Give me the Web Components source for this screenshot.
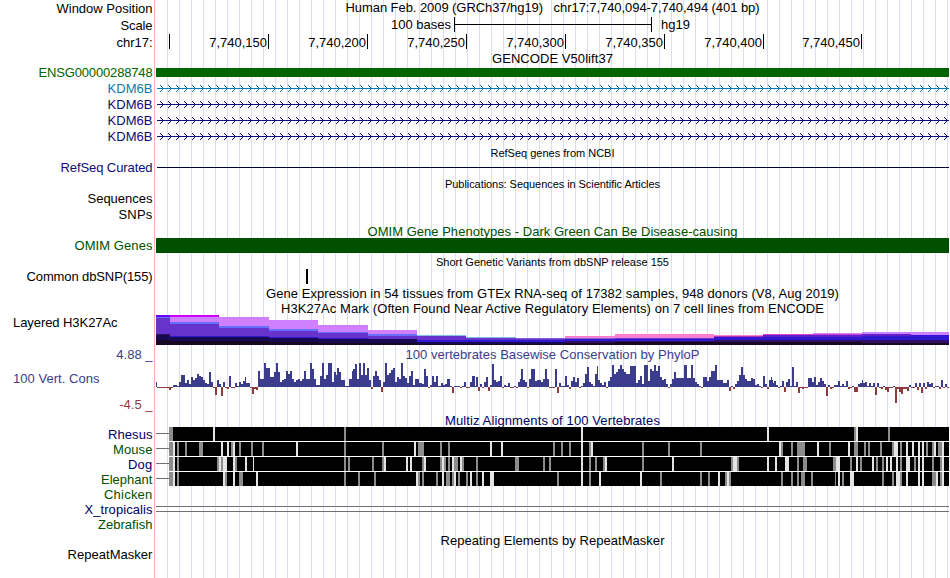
<!DOCTYPE html>
<html lang="en">
<head>
<meta charset="utf-8">
<title>Genome tracks</title>
<style>
  body {
    margin: 0;
    background: white;
    font: 13px/15px "Liberation Sans", Arial, sans-serif;
    color: black;
    overflow: hidden;
  }
</style>
</head>
<body>
<genome-view>
  <track-row label="Window Position" fit="96" pad="1" height="17">
    <track-title fit="414">Human Feb. 2009 (GRCh37/hg19)   chr17:7,740,094-7,740,494 (401 bp)</track-title>
  </track-row>
  <track-row label="Scale" fit="32" pad="1" height="17"><scale-bar></scale-bar></track-row>
  <track-row label="chr17:" fit="36" pad="1" height="17"><base-ruler></base-ruler></track-row>
  <track-row height="14"><track-title fit="121">GENCODE V50lift37</track-title></track-row>
  <track-row label="ENSG00000288748" fit="114" color="#006400" height="16"><solid-item top="3" size="9" color="#006400"></solid-item></track-row>
  <track-row label="KDM6B" fit="45" color="#0c78b0" height="16"><gene-line color="#0c78b0"></gene-line></track-row>
  <track-row label="KDM6B" fit="45" color="#0c0c78" height="16"><gene-line color="#0c0c78"></gene-line></track-row>
  <track-row label="KDM6B" fit="45" color="#0c0c78" height="16"><gene-line color="#0c0c78"></gene-line></track-row>
  <track-row label="KDM6B" fit="45" color="#0c0c78" height="16"><gene-line color="#0c0c78"></gene-line></track-row>
  <track-row height="15"><track-title small pad="2" fit="124">RefSeq genes from NCBI</track-title></track-row>
  <track-row label="RefSeq Curated" fit="92" color="#0c0c78" height="16"><solid-item top="7" size="1" left="1" color="#00003c"></solid-item></track-row>
  <track-row height="15"><track-title small pad="2" fit="215">Publications: Sequences in Scientific Articles</track-title></track-row>
  <track-row label="Sequences" fit="65" height="16"></track-row>
  <track-row label="SNPs" fit="34" height="16"></track-row>
  <track-row height="15"><track-title pad="1" fit="370" color="#005000">OMIM Gene Phenotypes - Dark Green Can Be Disease-causing</track-title></track-row>
  <track-row label="OMIM Genes" fit="78" color="#005000" height="15"><solid-item size="15" color="#005000"></solid-item></track-row>
  <track-row height="16"><track-title small pad="3" fit="233">Short Genetic Variants from dbSNP release 155</track-title></track-row>
  <track-row label="Common dbSNP(155)" fit="126" height="16"><solid-item size="15" left="150" length="2" color="black"></solid-item></track-row>
  <track-row height="16"><track-title pad="1" fit="573">Gene Expression in 54 tissues from GTEx RNA-seq of 17382 samples, 948 donors (V8, Aug 2019)</track-title></track-row>
  <track-row height="14"><track-title fit="543">H3K27Ac Mark (Often Found Near Active Regulatory Elements) on 7 cell lines from ENCODE</track-title></track-row>
  <track-row label="Layered H3K27Ac" fit="104.5" start height="32"><layered-signal></layered-signal></track-row>
  <track-row label="100 Vert. Cons" fit="86.5" start pad="24" color="#3c3c8c" height="65" max="4.88" min="-4.5">
    <track-title fit="294" color="#3c3c8c">100 vertebrates Basewise Conservation by PhyloP</track-title>
    <cons-plot></cons-plot>
  </track-row>
  <track-row height="15"><track-title pad="1" fit="215" color="#000064">Multiz Alignments of 100 Vertebrates</track-title></track-row>
  <track-row label="Rhesus" fit="44.5" color="#000064" height="15"><align-strip species="rhesus"></align-strip></track-row>
  <track-row label="Mouse" fit="39.5" color="#005000" height="15"><align-strip species="mouse"></align-strip></track-row>
  <track-row label="Dog" fit="24.5" color="#000064" height="15"><align-strip species="dog"></align-strip></track-row>
  <track-row label="Elephant" fit="51.5" color="#005000" height="15"><align-strip species="elephant"></align-strip></track-row>
  <track-row label="Chicken" fit="48.5" color="#005000" height="15"></track-row>
  <track-row label="X_tropicalis" fit="68" color="#000064" height="15">
    <solid-item top="4" size="1" color="#707070"></solid-item>
    <solid-item top="4" size="1" color="#707070"></solid-item>
  </track-row>
  <track-row label="Zebrafish" fit="54.5" color="#005000" height="15"></track-row>
  <track-row height="15"><track-title pad="1" fit="224">Repeating Elements by RepeatMasker</track-title></track-row>
  <track-row label="RepeatMasker" fit="85" height="31"></track-row>
</genome-view>

<script>
// all track graphics share this x origin, plots are drawn in page pixels
const ORIGIN = 156
const WIDTH = 793

// spread the letters so that the text gets exactly the given width
function fitText(el, width) {
  if (!width) return
  const natural = el.getBoundingClientRect().width
  el.style.letterSpacing = `${(width - natural) / el.textContent.length}px`
}

function svg(height, body) {
  return `<svg width="${WIDTH}" height="${height}" viewBox="${ORIGIN} 0 ${WIDTH} ${height}" shape-rendering="crispEdges">${body}</svg>`
}

function rect(x, y, w, h, fill) {
  return `<rect x="${x}" y="${y}" width="${w}" height="${h}" fill="${fill}"/>`
}

class GenomeView extends HTMLElement {
  connectedCallback() {
    this.attachShadow({ mode: "open" }).innerHTML = `
      <style>
        :host {
          display: flex;
          flex-direction: column;
          width: 949px;
          height: 578px;
          background:
            linear-gradient(#ffb4b4, #ffb4b4) 154px 0 / 1px 100% no-repeat,
            repeating-linear-gradient(90deg, #dcdcf8 0 1px, transparent 1px 12px) 167px 0 / 782px 100% no-repeat;
        }
      </style>
      <slot></slot>
    `
  }
}

class TrackRow extends HTMLElement {
  connectedCallback() {
    const attr = (name) => this.getAttribute(name)
    const max = attr("max")
    this.attachShadow({ mode: "open" }).innerHTML = `
      <style>
        :host { display: flex; flex: none; height: ${attr("height")}px; }
        .side {
          box-sizing: border-box;
          flex: none;
          display: grid;
          width: 156px;
          padding-right: 3.5px;
          color: ${attr("color") || "black"};
        }
        .side > * { grid-area: 1 / 1; white-space: pre; justify-self: end; }
        .label { margin-top: ${attr("pad") || 0}px; align-self: start; }
        :host([start]) .label { justify-self: start; margin-left: 13px; }
        .limits { display: flex; flex-direction: column; justify-content: space-between; height: 65px; text-align: right; }
        .min { color: #8c3c3c; }
        .data { display: flex; flex-direction: column; width: ${WIDTH}px; }
      </style>
      <div class="side">
        <span class="label">${attr("label") || ""}</span>
        ${max ? `<div class="limits"><span>${max} _</span><span class="min">${attr("min")} _</span></div>` : ""}
      </div>
      <div class="data"><slot></slot></div>
    `
    fitText(this.shadowRoot.querySelector(".label"), attr("fit"))
  }
}

class TrackTitle extends HTMLElement {
  connectedCallback() {
    this.attachShadow({ mode: "open" }).innerHTML = `
      <style>
        :host {
          display: block;
          align-self: center;
          height: 15px;
          margin-top: ${this.getAttribute("pad") || 0}px;
          color: ${this.getAttribute("color") || "black"};
        }
        :host([small]) { font-size: 11px; line-height: 13px; height: 13px; }
        slot { display: block; white-space: pre; }
      </style>
      <slot></slot>
    `
    fitText(this, this.getAttribute("fit"))
  }
}

class ScaleBar extends HTMLElement {
  connectedCallback() {
    this.attachShadow({ mode: "open" }).innerHTML = `
      <style>
        :host { display: flex; padding-left: 235px; }
        .bar {
          display: flex;
          align-items: center;
          box-sizing: border-box;
          width: 198px;
          height: 15px;
          margin: 0 9px 0 3px;
          border: solid black;
          border-width: 0 1px;
        }
        .bar::before { content: ""; flex: 1; height: 1px; background: black; }
      </style>
      <span class="from">100 bases</span><span class="bar"></span><span>hg19</span>
    `
    fitText(this.shadowRoot.querySelector(".from"), 60)
  }
}

class BaseRuler extends HTMLElement {
  connectedCallback() {
    const ticks = [[169, ""], [268, "7,740,150"], [367, "7,740,200"], [466, "7,740,250"],
      [565, "7,740,300"], [664, "7,740,350"], [763, "7,740,400"], [861, "7,740,450"]]
    let last = ORIGIN
    const cells = ticks.map(([x, text]) => {
      const cell = `<span style="width: ${x + 1 - last}px">${text}</span>`
      last = x + 1
      return cell
    })
    this.attachShadow({ mode: "open" }).innerHTML = `
      <style>
        :host { display: flex; }
        span {
          box-sizing: border-box;
          height: 15px;
          padding: 1px 1px 0 0;
          border-right: 1px solid black;
          text-align: right;
        }
      </style>
      ${cells.join("")}
    `
  }
}

class SolidItem extends HTMLElement {
  connectedCallback() {
    const attr = (name) => this.getAttribute(name)
    this.attachShadow({ mode: "open" }).innerHTML = `
      <style>
        :host {
          display: block;
          height: ${attr("size")}px;
          margin: ${attr("top") || 0}px 0 0 ${attr("left") || 0}px;
          ${attr("length") ? `width: ${attr("length")}px;` : ""}
          background: ${attr("color")};
        }
      </style>
    `
  }
}

class GeneLine extends HTMLElement {
  connectedCallback() {
    const color = this.getAttribute("color")
    let body = rect(157, 7, 792, 1, color)
    for (let x = 160; x < 949; x += 8) {
      for (let i = 0; i < 3; i++) {
        body += rect(x + i, 4 + i, 1, 1, color) + rect(x + i, 10 - i, 1, 1, color)
      }
    }
    this.attachShadow({ mode: "open" }).innerHTML = `
      <style>:host { display: block; } svg { display: block; }</style>
      ${svg(15, body)}
    `
  }
}

// column start, then the top edge and colour of each layer downwards
const LAYERS = [
  [156, 0, "#6600ff", 2, "#6470ff", 3, "#6633cc", 19, "#301060", 20, "#180a50", 25, "#180824"],
  [170, 0, "#cc00ff", 2, "#d080ff", 7, "#6670ff", 9, "#6633cc", 21, "#3018d0", 22, "#180a50", 26, "#180824"],
  [219, 2, "#d080ff", 11, "#6670ff", 13, "#6633cc", 21, "#3018d0", 22, "#180a50", 26, "#180824"],
  [269, 5, "#d080ff", 14, "#6670ff", 16, "#6633cc", 22, "#3018d0", 23, "#180a50", 27, "#180824"],
  [318, 10, "#d080ff", 17, "#6670ff", 18, "#6633cc", 23, "#3018d0", 24, "#180a50", 28, "#180824"],
  [368, 15, "#d080ff", 19, "#6670ff", 21, "#6633cc", 24, "#180a50", 28, "#180824"],
  [417, 20, "#80c0f0", 21, "#6633cc", 25, "#3018d0", 27, "#180a50", 29, "#180824"],
  [466, 22, "#80c0f0", 23, "#6633cc", 25, "#3018d0", 27, "#180a50", 29, "#180824"],
  [516, 23, "#8060d0", 24, "#6633cc", 25, "#3018d0", 27, "#180a50", 29, "#180824"],
  [565, 21, "#ff80d0", 23, "#8060d0", 24, "#3018d0", 26, "#301060", 28, "#180824"],
  [615, 19, "#ff80d0", 23, "#6633cc", 24, "#3018d0", 26, "#301060", 27, "#180824"],
  [714, 20, "#ff80d0", 21, "#b030c0", 22, "#3018d0", 25, "#301060", 27, "#180824"],
  [763, 19, "#e040e0", 20, "#6020c8", 22, "#3018d0", 25, "#301060", 27, "#180824"],
  [813, 18, "#d080ff", 19, "#d040e0", 20, "#6020c8", 22, "#3018d0", 25, "#301060", 27, "#180824"],
  [862, 17, "#d080ff", 19, "#6020c8", 21, "#3018d0", 25, "#301060", 28, "#180824"],
  [911, 17, "#d080ff", 20, "#3018d0", 25, "#301060", 28, "#180824"],
  [949]
]

class LayeredSignal extends HTMLElement {
  connectedCallback() {
    let body = ""
    LAYERS.slice(0, -1).forEach(([x, ...layers], n) => {
      for (let i = 0; i < layers.length; i += 2) {
        body += rect(x, layers[i], LAYERS[n + 1][0] - x, 30 - layers[i], layers[i + 1])
      }
    })
    this.attachShadow({ mode: "open" }).innerHTML = `
      <style>:host { display: block; } svg { display: block; }</style>
      ${svg(30, body)}
    `
  }
}

// runs of scores, 2px for each base: the x of the first one, then the heights
const SCORES = [
  [156, 5],
  [157, -1, -1, -1, -1, -1, -1, -3, -1, 2, 2, 1, 5, 12, 12, 4, 7, 3, 10, 7, 9, 13, 11, 10, 7, 4, 3, 15, 5, -1, -8, 7, 3, -9, 5, -1, -2, 11, -1, -1, 4, 1, 5, 3, 6],
  [245, 10],
  [246, 4, 4, -1, -7, -2, -3, 16, 8, 8, 24, 19, 19, 10, 10, 15, 24, 15, 5, 7, 8, 16, 13, 16, 8, 5, 7, 8, 6, 8, 16, 8, 8, 24, 18, 8, 2, 2, 11, 24, 8, 12, 24, 24, 5, 15],
  [336, 12],
  [337, 19, 15, 7, 7, 1, 1],
  [349, 8],
  [352, 16],
  [353, 18, 23, 8, 24, 12, 24, 12, 19, 7, -2, 11, 16, 11, 7, -5, 5, 24, 12, 14, 17, 19, 5, 10, 8, 24, 11, 9, 4, 11, 16, 2, 8, 8, 4],
  [421, 4],
  [422, 3, 18, 11, -1, 2, 11, 5, 11, 1],
  [441, 4, 2, 3, 8],
  [450, 1, -6, 1, 1, 1, -1, 1, 5, -1, -1, 5, 11],
  [475, 1],
  [476, 10, -4, 3, -1, 5, 10, -4, 2, 23, 7, 5, 6, 11, -1, 2, 1, 4, -1, -1, 1, -1, 5],
  [520, 8],
  [521, 18, 7, 5, -1, 8, 18, 18, 6, 7, 7, 5, 8, 18, 8],
  [549, -1, -1, -1],
  [555, 18, -6, 4, 1, 1, 11, 2, -2, 6, 10, 5, 9, -1, 1, 4, 13, 20, 5, 3, 1, 13],
  [597, 21],
  [598, 7, 4, 2, 5, -1, 6, 10, 22, 13, 15, 18, 22, 18, 15, 13, 13, 21, 21, 21, 4, 7, 11, 3, 22, 22, 6, 18, 16, 22, 16, 21, 10, 7, 8, 3, -1, 3, 8, 15, 9, 9, 9, 9, 22],
  [686, 22],
  [687, 9, 9, 22, 9, 5, 3, 1, -1, 10, 10, 6, 10, 16, 16, 22, 7, 7, 7, 4, 4, 7, -4, 1, -2, 3, 6, 12, 20, 12, 8, 6],
  [749, 6],
  [751, 9, 8, 2, 3, 1, -1, 11, 3, -2, 7],
  [771, 10],
  [772, 7],
  [773, 4],
  [774, 6, 2, -1, 1, 6, -5, 5, 8, 1, 20, 1, 5, -6, -1, -2, -1, -1, 9, 9, 5, 10, 2, 5, 9, 6, 3, -9, 2, -2, -1, 2, 2, 6, 1, 3, 1, 6, -2, -1, 1, -5, -5, 3, 4],
  [862, 7],
  [863, 4, 5, 1, 4, 1, 4, -8, 4, -1, -2, 1, -3, -5, -1, -1, 1, -16, -2, -5, -7, -2, -2, -4, 2, -1, -1, 4, -3, 4, -6, 4, -2, 5, 3, 4, -1, 1, 1, -2, 7, -1, 3, -1]
]

class ConsPlot extends HTMLElement {
  connectedCallback() {
    const bars = SCORES.flatMap(([x, ...scores]) => scores.map((score, i) => [x + i * 2, score]))
    let body = ""
    bars.forEach(([x, score], i) => {
      const end = i + 1 < bars.length ? bars[i + 1][0] : 949
      body += score > 0
        ? rect(x, 25 - score, end - x, score, "#3c3c8c")
        : rect(x, 25, end - x, -score, "#8c3c3c")
    })
    // the title's 15px stand above, the zero line is at 40px in the row
    this.attachShadow({ mode: "open" }).innerHTML = `
      <style>:host { display: block; } svg { display: block; }</style>
      ${svg(50, body)}
    `
  }
}

// g = grey, w = light; each mark is shade, x and an optional width after a slash
const MARKS = {
  rhesus: "g169/4 w213 g344 w581 w767 g854 w856 g888",
  mouse: `g169/4 w173 g177 g185 g199/4 w221 w227 g231 w233 g239 g251 g262 w296 g344 g382 w414 g418/6
    g440 g448 w490 w501 g553 g561 g569 w581 g589 w591 g642 g668 g700 w779 g781 g791 g797/8 w817 g829
    w848 g854/4 g864 g868 g880 g892 w894/4 g900 w906 w912 w918 w922 g926 g932 w934 g938/4 w942`,
  dog: `g169/4 w173 g177 g217 w219 g221 w223/4 w233 g235 w245 w253/1 g344 g348 g372 g382 w384 w406 w410
    g422 w424 g440 w442 g444 g448 w452 g454/4 w460 g462 g476 g515/4 g543 g549 w581 g589 g595 g603 w605
    g642 w672 g731 w733/4 g737 w767 w775 w785/4 g797 g803/4 g833/3 w836/4 g850 w856 g860 w872 g876 g882
    w886 w890 w896 g900 w906/4 g914 w918 w922 g932 g940 w942`,
  elephant: `g169/4 w173 g177 w223 g225 w233 g239/4 w256 g344 g358 g374 w416 g418 g422 g436 w442 g446/4
    g452 w454 g458 g466 w470 g476 w482 w490/4 g557 w581 g589 w599 w640 g660 g700 g708 w718 g725 w727 g729
    g781 g791 g797 g801/4 g811 g835/1 w838 g842 w850/4 g882 g892 w896/4 g900 w906 w918 w922 g932/4 w936
    g940 w942`
}

class AlignStrip extends HTMLElement {
  connectedCallback() {
    const species = this.getAttribute("species")
    let body = rect(156, 6, 13, 1, "#707070") + rect(169, 0, 780, 14, "black")
    if (species !== "elephant") body += rect(169, 14, 780, 1, "white")
    MARKS[species].split(/\s+/).forEach((mark) => {
      const [x, width] = mark.slice(1).split("/")
      body += rect(x, 0, width || 2, 14, mark[0] === "g" ? "#8c8c8c" : "#e4e4e4")
    })
    this.attachShadow({ mode: "open" }).innerHTML = `
      <style>:host { display: block; } svg { display: block; }</style>
      ${svg(15, body)}
    `
  }
}

customElements.define("genome-view", GenomeView)
customElements.define("track-row", TrackRow)
customElements.define("track-title", TrackTitle)
customElements.define("scale-bar", ScaleBar)
customElements.define("base-ruler", BaseRuler)
customElements.define("solid-item", SolidItem)
customElements.define("gene-line", GeneLine)
customElements.define("layered-signal", LayeredSignal)
customElements.define("cons-plot", ConsPlot)
customElements.define("align-strip", AlignStrip)
</script>
</body>
</html>
